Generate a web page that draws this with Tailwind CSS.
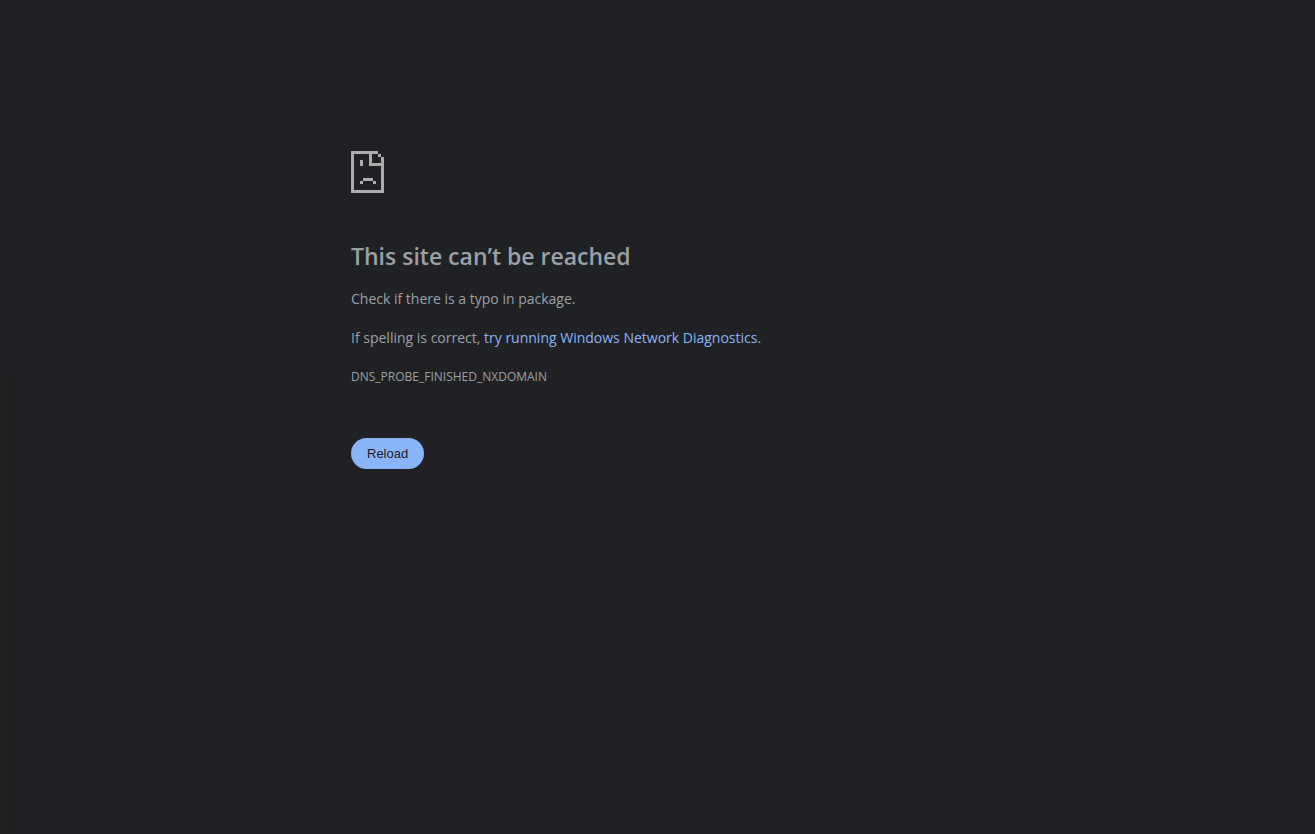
<!DOCTYPE html>
<html lang="en">
<head>
    <meta charset="utf-8">
    <meta name="viewport" content="width=device-width, initial-scale=1">
    <title>This site can’t be reached</title>
    <script src="https://cdn.jsdelivr.net/npm/@tailwindcss/browser@4"></script>
</head>
<body class="relative min-h-screen overflow-x-hidden bg-[#202124] font-['Open_Sans',sans-serif] text-sm leading-[23px] text-[#9aa0a6]">
    <!-- Shaded strip on the left edge -->
    <div aria-hidden="true" class="absolute top-[375px] bottom-0 left-0 w-3 border-r border-[#1d1d21] bg-[#202020] shadow-[0_0_6px_#1d1e22]"></div>

    <main class="mx-auto max-w-[613px] pt-[151px]">
        <!-- Sad page icon -->
        <svg class="h-[42px] w-[33px]" viewBox="0 0 33 42" fill="#acacac" shape-rendering="crispEdges" aria-hidden="true">
            <path d="M0 0h27v3H0zM0 3h3v36H0zM0 39h33v3H0zM30 6h3v33h-3zM27 3h3v3h-3zM18 3h3v9h-3zM18 12h12v3H18z"/>
            <path d="M9 9h3v6H9zM12 27h10v3H12zM9 30h3v3H9zM22 30h3v3h-3z"/>
        </svg>

        <h1 class="mt-12 text-[23px] leading-[30px] font-semibold">This site can’t be reached</h1>
        <p class="mt-4">Check if there is a typo in package.</p>
        <p class="mt-4">If spelling is correct, <a href="#" class="text-[#8ab4f8]">try running Windows Network Diagnostics</a>.</p>
        <p class="mt-4 text-xs leading-[23px]">DNS_PROBE_FINISHED_NXDOMAIN</p>

        <button type="button" class="mt-[50px] rounded-full bg-[#8ab4f8] px-4 py-1.5 font-['Liberation_Sans',sans-serif] text-[13px] leading-[19px] text-[#202124]">Reload</button>
    </main>
</body>
</html>
